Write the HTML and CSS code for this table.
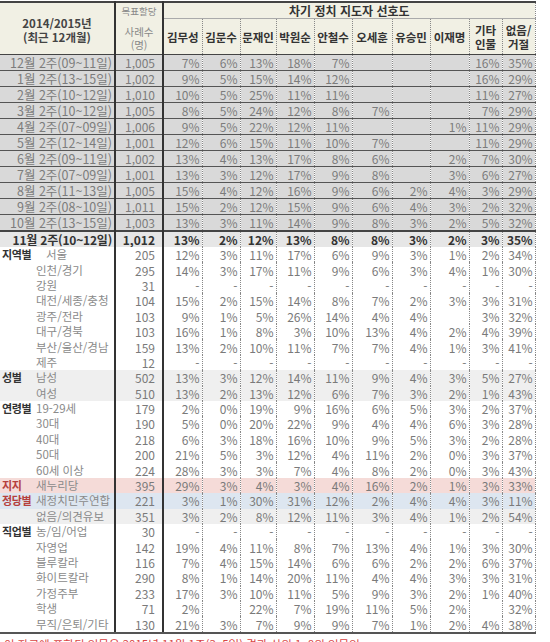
FILE: index.html
```html
<!DOCTYPE html>
<html lang="ko">
<head>
<meta charset="utf-8">
<title>차기 정치 지도자 선호도</title>
<link rel="stylesheet" href="styles.css">
</head>
<body>
<table class="grid">
<colgroup>
<col class="w-grp"><col class="w-sub"><col class="w-n">
<col class="w39"><col class="w38"><col class="w36"><col class="w38"><col class="w38"><col class="w40"><col class="w38"><col class="w39"><col class="w33"><col class="w33">
</colgroup>
<thead>
<tr class="h1">
<th colspan="2" rowspan="2" class="h-period"><div>2014/2015년</div><div>(최근 12개월)</div></th>
<th rowspan="2" class="h-n"><div class="l1">목표할당</div><div class="l2">사례수</div><div class="l3">(명)</div></th>
<th colspan="10" class="h-title">차기 정치 지도자 선호도</th>
</tr>
<tr class="h2">
<th>김무성</th><th>김문수</th><th>문재인</th><th>박원순</th><th>안철수</th><th>오세훈</th><th>유승민</th><th>이재명</th><th class="two">기타<br>인물</th><th class="two last">없음/<br>거절</th>
</tr>
</thead>
<tbody>
<tr class="p"><td colspan="2" class="plab">12월 2주(09~11일)</td><td class="n">1,005</td><td>7%</td><td>6%</td><td>13%</td><td>18%</td><td>7%</td><td></td><td></td><td></td><td>16%</td><td class="last">35%</td></tr>
<tr class="p"><td colspan="2" class="plab">1월 2주(13~15일)</td><td class="n">1,002</td><td>9%</td><td>5%</td><td>15%</td><td>14%</td><td>12%</td><td></td><td></td><td></td><td>16%</td><td class="last">29%</td></tr>
<tr class="p"><td colspan="2" class="plab">2월 2주(10~12일)</td><td class="n">1,010</td><td>10%</td><td>5%</td><td>25%</td><td>11%</td><td>11%</td><td></td><td></td><td></td><td>11%</td><td class="last">27%</td></tr>
<tr class="p"><td colspan="2" class="plab">3월 2주(10~12일)</td><td class="n">1,005</td><td>8%</td><td>5%</td><td>24%</td><td>12%</td><td>8%</td><td>7%</td><td></td><td></td><td>7%</td><td class="last">29%</td></tr>
<tr class="p"><td colspan="2" class="plab">4월 2주(07~09일)</td><td class="n">1,006</td><td>9%</td><td>5%</td><td>22%</td><td>12%</td><td>11%</td><td></td><td></td><td>1%</td><td>11%</td><td class="last">29%</td></tr>
<tr class="p"><td colspan="2" class="plab">5월 2주(12~14일)</td><td class="n">1,001</td><td>12%</td><td>6%</td><td>15%</td><td>11%</td><td>10%</td><td>7%</td><td></td><td></td><td>11%</td><td class="last">29%</td></tr>
<tr class="p"><td colspan="2" class="plab">6월 2주(09~11일)</td><td class="n">1,002</td><td>13%</td><td>4%</td><td>13%</td><td>17%</td><td>8%</td><td>6%</td><td></td><td>2%</td><td>7%</td><td class="last">30%</td></tr>
<tr class="p"><td colspan="2" class="plab">7월 2주(07~09일)</td><td class="n">1,001</td><td>13%</td><td>3%</td><td>12%</td><td>17%</td><td>9%</td><td>8%</td><td></td><td>3%</td><td>6%</td><td class="last">27%</td></tr>
<tr class="p"><td colspan="2" class="plab">8월 2주(11~13일)</td><td class="n">1,005</td><td>15%</td><td>4%</td><td>12%</td><td>16%</td><td>9%</td><td>6%</td><td>2%</td><td>4%</td><td>3%</td><td class="last">29%</td></tr>
<tr class="p"><td colspan="2" class="plab">9월 2주(08~10일)</td><td class="n">1,011</td><td>15%</td><td>2%</td><td>12%</td><td>15%</td><td>9%</td><td>6%</td><td>4%</td><td>3%</td><td>2%</td><td class="last">32%</td></tr>
<tr class="p"><td colspan="2" class="plab">10월 2주(13~15일)</td><td class="n">1,003</td><td>13%</td><td>3%</td><td>11%</td><td>14%</td><td>9%</td><td>8%</td><td>3%</td><td>2%</td><td>5%</td><td class="last">32%</td></tr>
<tr class="p cur"><td colspan="2" class="plab">11월 2주(10~12일)</td><td class="n">1,012</td><td>13%</td><td>2%</td><td>12%</td><td>13%</td><td>8%</td><td>8%</td><td>3%</td><td>2%</td><td>3%</td><td class="last">35%</td></tr>

<tr class="s"><td class="grp">지역별</td><td class="sub ind">서울</td><td class="n">205</td><td>12%</td><td>3%</td><td>11%</td><td>17%</td><td>6%</td><td>9%</td><td>3%</td><td>1%</td><td>2%</td><td class="last">34%</td></tr>
<tr class="s"><td class="grp"></td><td class="sub">인천/경기</td><td class="n">295</td><td>14%</td><td>3%</td><td>17%</td><td>11%</td><td>9%</td><td>6%</td><td>3%</td><td>4%</td><td>1%</td><td class="last">30%</td></tr>
<tr class="s"><td class="grp"></td><td class="sub">강원</td><td class="n">31</td><td>-</td><td>-</td><td>-</td><td>-</td><td>-</td><td>-</td><td>-</td><td>-</td><td>-</td><td class="last">-</td></tr>
<tr class="s"><td class="grp"></td><td class="sub">대전/세종/충청</td><td class="n">104</td><td>15%</td><td>2%</td><td>15%</td><td>14%</td><td>8%</td><td>7%</td><td>2%</td><td>3%</td><td>3%</td><td class="last">31%</td></tr>
<tr class="s"><td class="grp"></td><td class="sub">광주/전라</td><td class="n">103</td><td>9%</td><td>1%</td><td>5%</td><td>26%</td><td>14%</td><td>4%</td><td>4%</td><td></td><td>3%</td><td class="last">32%</td></tr>
<tr class="s"><td class="grp"></td><td class="sub">대구/경북</td><td class="n">103</td><td>16%</td><td>1%</td><td>8%</td><td>3%</td><td>10%</td><td>13%</td><td>4%</td><td>2%</td><td>4%</td><td class="last">39%</td></tr>
<tr class="s"><td class="grp"></td><td class="sub">부산/울산/경남</td><td class="n">159</td><td>13%</td><td>2%</td><td>10%</td><td>11%</td><td>7%</td><td>7%</td><td>4%</td><td>1%</td><td>3%</td><td class="last">41%</td></tr>
<tr class="s"><td class="grp"></td><td class="sub">제주</td><td class="n">12</td><td>-</td><td>-</td><td>-</td><td>-</td><td>-</td><td>-</td><td>-</td><td>-</td><td>-</td><td class="last">-</td></tr>

<tr class="s gray"><td class="grp">성별</td><td class="sub">남성</td><td class="n">502</td><td>13%</td><td>3%</td><td>12%</td><td>14%</td><td>11%</td><td>9%</td><td>4%</td><td>3%</td><td>5%</td><td class="last">27%</td></tr>
<tr class="s gray"><td class="grp"></td><td class="sub">여성</td><td class="n">510</td><td>13%</td><td>2%</td><td>13%</td><td>12%</td><td>6%</td><td>7%</td><td>3%</td><td>2%</td><td>1%</td><td class="last">43%</td></tr>

<tr class="s"><td class="grp">연령별</td><td class="sub">19-29세</td><td class="n">179</td><td>2%</td><td>0%</td><td>19%</td><td>9%</td><td>16%</td><td>6%</td><td>5%</td><td>3%</td><td>2%</td><td class="last">37%</td></tr>
<tr class="s"><td class="grp"></td><td class="sub">30대</td><td class="n">190</td><td>5%</td><td>0%</td><td>20%</td><td>22%</td><td>9%</td><td>4%</td><td>4%</td><td>6%</td><td>3%</td><td class="last">28%</td></tr>
<tr class="s"><td class="grp"></td><td class="sub">40대</td><td class="n">218</td><td>6%</td><td>3%</td><td>18%</td><td>16%</td><td>10%</td><td>9%</td><td>5%</td><td>3%</td><td>2%</td><td class="last">28%</td></tr>
<tr class="s"><td class="grp"></td><td class="sub">50대</td><td class="n">200</td><td>21%</td><td>5%</td><td>3%</td><td>12%</td><td>4%</td><td>11%</td><td>2%</td><td>0%</td><td>3%</td><td class="last">37%</td></tr>
<tr class="s"><td class="grp"></td><td class="sub">60세 이상</td><td class="n">224</td><td>28%</td><td>3%</td><td>3%</td><td>7%</td><td>4%</td><td>8%</td><td>2%</td><td>0%</td><td>3%</td><td class="last">43%</td></tr>

<tr class="s pink"><td class="grp red">지지</td><td class="sub">새누리당</td><td class="n">395</td><td>29%</td><td>3%</td><td>4%</td><td>3%</td><td>4%</td><td>16%</td><td>2%</td><td>1%</td><td>3%</td><td class="last">33%</td></tr>
<tr class="s blue"><td class="grp red">정당별</td><td class="sub">새정치민주연합</td><td class="n">221</td><td>3%</td><td>1%</td><td>30%</td><td>31%</td><td>12%</td><td>2%</td><td>4%</td><td>4%</td><td>3%</td><td class="last">11%</td></tr>
<tr class="s gray"><td class="grp"></td><td class="sub">없음/의견유보</td><td class="n">351</td><td>3%</td><td>2%</td><td>8%</td><td>12%</td><td>11%</td><td>3%</td><td>4%</td><td>1%</td><td>2%</td><td class="last">54%</td></tr>

<tr class="s"><td class="grp">직업별</td><td class="sub">농/임/어업</td><td class="n">30</td><td>-</td><td>-</td><td>-</td><td>-</td><td>-</td><td>-</td><td>-</td><td>-</td><td>-</td><td class="last">-</td></tr>
<tr class="s"><td class="grp"></td><td class="sub">자영업</td><td class="n">142</td><td>19%</td><td>4%</td><td>11%</td><td>8%</td><td>7%</td><td>13%</td><td>4%</td><td>1%</td><td>3%</td><td class="last">30%</td></tr>
<tr class="s"><td class="grp"></td><td class="sub">블루칼라</td><td class="n">116</td><td>7%</td><td>4%</td><td>15%</td><td>14%</td><td>6%</td><td>6%</td><td>2%</td><td>2%</td><td>6%</td><td class="last">37%</td></tr>
<tr class="s"><td class="grp"></td><td class="sub">화이트칼라</td><td class="n">290</td><td>8%</td><td>1%</td><td>14%</td><td>20%</td><td>11%</td><td>4%</td><td>4%</td><td>3%</td><td>3%</td><td class="last">31%</td></tr>
<tr class="s"><td class="grp"></td><td class="sub">가정주부</td><td class="n">233</td><td>17%</td><td>3%</td><td>10%</td><td>11%</td><td>5%</td><td>9%</td><td>3%</td><td>2%</td><td>1%</td><td class="last">40%</td></tr>
<tr class="s"><td class="grp"></td><td class="sub">학생</td><td class="n">71</td><td>2%</td><td></td><td>22%</td><td>7%</td><td>19%</td><td>11%</td><td>5%</td><td>2%</td><td></td><td class="last">32%</td></tr>
<tr class="s end"><td class="grp"></td><td class="sub">무직/은퇴/기타</td><td class="n">130</td><td>21%</td><td>3%</td><td>7%</td><td>9%</td><td>9%</td><td>7%</td><td>1%</td><td>2%</td><td>4%</td><td class="last">38%</td></tr>
</tbody>
</table>
<p class="note">이 자료에 포함된 인물은 2015년 11월 1주(3~5일) 결과 상위 1~8위 인물임</p>
</body>
</html>
```

FILE: styles.css
```css
html, body {
  margin: 0;
  padding: 0;
  background: #ffffff;
}
body {
  font-family: "Noto Sans CJK KR", "Noto Sans", sans-serif;
  font-size: 12px;
  color: #777;
  width: 550px;
  height: 642px;
  overflow: hidden;
}
.grid {
  border-collapse: collapse;
  table-layout: fixed;
  width: 535px;
  margin-top: 1px;
  border-top: 2px solid #444;
}
.w-grp { width: 36px; }
.w-sub { width: 79px; }
.w-n { width: 48px; }
.w33 { width: 33px; }
.w36 { width: 36px; }
.w38 { width: 38px; }
.w39 { width: 39px; }
.w40 { width: 40px; }

th {
  background: #f1f0e4;
  padding: 0;
  font-weight: bold;
  color: #333;
  font-size: 11.5px;
  border-right: 1px dotted #888;
}
.h1 .h-title {
  height: 15px;
  line-height: 15px;
  border-bottom: 1px solid #aaa;
  font-size: 12px;
  text-align: center;
}
.h2 th {
  height: 35px;
  line-height: 14px;
  border-bottom: 1px solid #444;
  text-align: center;
}
.h-period {
  border-bottom: 1px solid #444;
  color: #444;
  font-size: 11.5px;
  line-height: 14px;
  text-align: center;
  vertical-align: middle;
  padding-top: 2px;
}
.h-n {
  border-left: 2px solid #333;
  border-right: 2px solid #333;
  border-bottom: 1px solid #444;
  font-weight: normal;
  color: #888;
  text-align: center;
  vertical-align: top;
  font-size: 9.5px;
}
.h-n .l1 { line-height: 12px; margin-top: 2px; }
.h-n .l2 { line-height: 13px; margin-top: 8px; font-size: 10.5px; }
.h-n .l3 { line-height: 13px; font-size: 10.5px; }

td {
  padding: 0 2px 0 0;
  text-align: right;
  white-space: nowrap;
  overflow: hidden;
  border-right: 1px dotted #888;
}
td.n {
  border-left: 2px solid #333;
  border-right: 2px solid #333;
  padding-right: 7px;
}
td.plab, td.grp {
  border-right: none;
}
td.sub {
  border-right: 2px solid #333;
}

.p td {
  height: 15px;
  line-height: 15px;
  background: #d9d9d9;
  color: #7c7c7c;
  border-bottom: 1px solid #555;
}
.p td.plab { padding-right: 2px; font-size: 12.5px; }
.p.cur td {
  background: #e6e6e6;
  color: #333;
  font-weight: bold;
  border-top: 2px solid #444;
  border-bottom: none;
}
.p.cur td.plab { font-size: 12px; letter-spacing: -0.2px; }

.s td {
  height: 15.4px;
  line-height: 15px;
  color: #7a7a7a;
}
.s td.grp {
  text-align: left;
  font-weight: bold;
  color: #333;
  font-size: 11px;
  letter-spacing: -0.4px;
  padding: 0 0 0 2px;
}
.s td.grp.red { color: #b5403d; }
.s td.sub {
  text-align: left;
  color: #8a8a8a;
  font-size: 11.5px;
  padding: 0;
}
.s td.sub.ind { padding-left: 10px; }
.s.gray td { background: #efefef; }
.s.pink td { background: #f5dbd8; }
.s.blue td { background: #dde6f0; }
.s.end td { border-bottom: 2px solid #555; }

.note {
  margin: 3px 0 0 4px;
  font-size: 11.5px;
  line-height: 14px;
  color: #d94444;
  white-space: nowrap;
}
```
